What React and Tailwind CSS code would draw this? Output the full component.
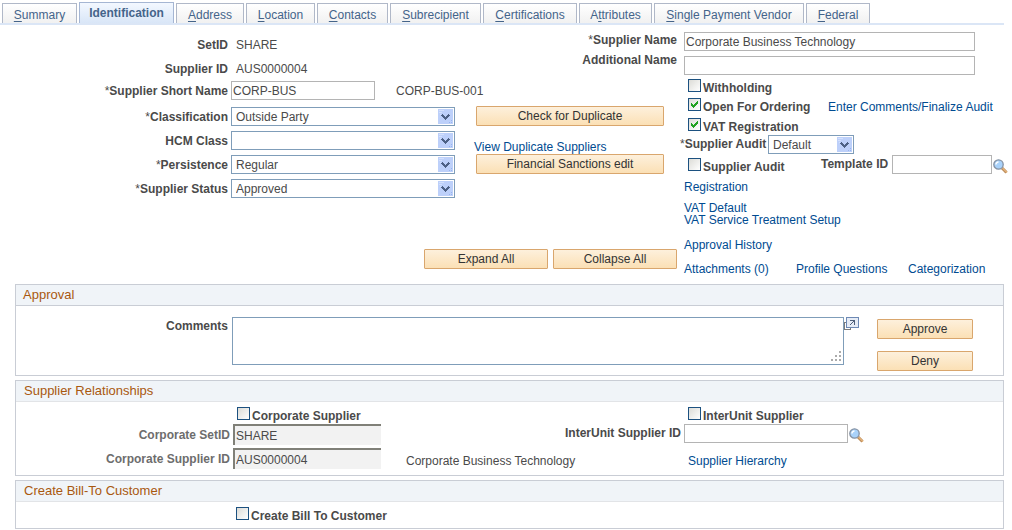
import { useState } from "react";

const tabs = [
  { before: "", key: "S", after: "ummary", width: "w-[75px]" },
  { before: "Identification", key: "", after: "", width: "w-[95px]" },
  { before: "", key: "A", after: "ddress", width: "w-[68px]" },
  { before: "", key: "L", after: "ocation", width: "w-[69px]" },
  { before: "", key: "C", after: "ontacts", width: "w-[71px]" },
  { before: "", key: "S", after: "ubrecipient", width: "w-[91px]" },
  { before: "", key: "C", after: "ertifications", width: "w-[94px]" },
  { before: "A", key: "t", after: "tributes", width: "w-[73px]" },
  { before: "", key: "S", after: "ingle Payment Vendor", width: "w-[150px]" },
  { before: "", key: "F", after: "ederal", width: "w-[64px]" },
];

function Tabs() {
  const [active, setActive] = useState(1);

  return (
    <nav className="mr-2 flex h-[25px] items-end gap-[2px] border-b-2 border-[#dbe6f6] pl-[2px]">
      {tabs.map((tab, index) => (
        <a
          key={index}
          href="#"
          onClick={() => setActive(index)}
          className={
            "flex items-center justify-center border border-b-0 whitespace-nowrap text-[#44648a] " +
            tab.width +
            (index === active
              ? " h-[21px] border-[#a5b6d3] bg-linear-to-b from-[#f3f8ff] to-[#d9e6f7] text-[12px] font-bold"
              : " h-[20px] border-[#b0b8c8] bg-linear-to-b from-white to-[#f1f1f1] pt-[2px] text-[12px]")
          }
        >
          <span>
            {tab.before}
            <span className="underline underline-offset-2">{tab.key}</span>
            {tab.after}
          </span>
        </a>
      ))}
    </nav>
  );
}

function Label({ htmlFor, className = "", required, children }) {
  return (
    <label
      htmlFor={htmlFor}
      className={"shrink-0 text-[12px] font-bold whitespace-nowrap " + className}
    >
      {required && <span className="font-normal">*</span>}
      {children}
    </label>
  );
}

function TextInput({ id, value = "", className }) {
  return (
    <input
      id={id}
      type="text"
      defaultValue={value}
      className={"block h-[19px] border border-[#b4b4b4] bg-white px-[1px] text-[12px] outline-none " + className}
    />
  );
}

// greyed out field with the old inset border
function InsetInput({ id, value }) {
  return (
    <input
      id={id}
      type="text"
      readOnly
      defaultValue={value}
      className="block h-[21px] w-[148px] border-t-2 border-l-2 border-[#808078] bg-[#f2f2f2] px-[1px] text-[12px] outline-none"
    />
  );
}

function SelectBox({ id, value, className }) {
  return (
    <div className={"relative h-[19px] " + className}>
      <select
        id={id}
        defaultValue={value}
        className="block h-full w-full appearance-none border border-[#7f9db9] bg-white px-1 text-[12px] outline-none"
      >
        <option value={value}>{value}</option>
      </select>
      <svg
        className="pointer-events-none absolute top-[2px] right-[2px]"
        width="15"
        height="15"
        viewBox="0 0 15 15"
        shapeRendering="crispEdges"
      >
        <rect width="15" height="15" rx="1" fill="#bdd0fa" />
        <path d="M1 1h5v1H1zM1 3h3v1H1zM2 5h1v1H2z" fill="#d3e0fd" />
        <path d="M11 13h1v1h-1zM13 11h1v1h-1zM13 13h1v1h-1z" fill="#98b4ee" />
        <path
          d="M4 5h1v1H4zM10 5h1v1h-1zM3 6h3v1H3zM9 6h3v1H9zM4 7h3v1H4zM8 7h3v1H8zM5 8h5v1H5zM6 9h3v1H6zM7 10h1v1H7z"
          fill="#4d6185"
        />
      </svg>
    </div>
  );
}

function Checkbox({ id, checked = false, className = "", children }) {
  return (
    <div className={"flex items-start gap-[2px] " + className}>
      <span className="relative h-[13px] w-[13px]">
        <input
          id={id}
          type="checkbox"
          defaultChecked={checked}
          className="peer block h-[13px] w-[13px] appearance-none border border-[#1c5180] bg-linear-to-br from-[#dcdcd7] to-white"
        />
        <svg
          className="pointer-events-none absolute top-0 left-0 hidden peer-checked:block"
          width="13"
          height="13"
          viewBox="0 0 13 13"
          shapeRendering="crispEdges"
        >
          <path
            d="M9 3h1v3H9v1H8v1H7v1H6v1H5V9H4V8H3V5h1v1h1v1h1V6h1V5h1V4h1z"
            fill="#21a121"
          />
        </svg>
      </span>
      <Label htmlFor={id} className="mt-[2px] leading-[14px]">
        {children}
      </Label>
    </div>
  );
}

function Button({ className, children }) {
  return (
    <button
      type="button"
      className={
        "block h-[20px] rounded-[1px] border border-[#d9a66d] bg-linear-to-b from-[#fdf0dc] to-[#fbe0b5] text-center text-[12px] leading-[18px] text-[#333333] " +
        className
      }
    >
      {children}
    </button>
  );
}

function Link({ className = "", children }) {
  return (
    <a href="#" className={"block text-[12px] leading-[12px] whitespace-nowrap text-[#004b91] " + className}>
      {children}
    </a>
  );
}

function LookupButton() {
  return (
    <button type="button" aria-label="Look up" className="ml-px block">
      <svg width="15" height="15" viewBox="0 0 15 15">
        <path d="M9 9l4.500 4.500" stroke="#b98a58" strokeWidth="3" />
        <path d="M9.500 9l4.500 4.500" stroke="#e3b27a" strokeWidth="1.500" />
        <circle cx="5.500" cy="5.500" r="4.700" fill="#a9d2fa" stroke="#8591a2" strokeWidth="1.300" />
        <path d="M3 5.500a2.500 2.500 0 0 1 2.500-2.500" stroke="#ffffff" strokeWidth="1.500" fill="none" />
      </svg>
    </button>
  );
}

function Panel({ title, tone, className, children }) {
  return (
    <section className="mr-2 ml-[15px] border border-[#c9cdd5]">
      <h2
        className={
          "h-[21px] border-b bg-[#f0f4f8] text-[13px] leading-[20px] text-[#a9580f] " +
          (tone === "strong" ? "border-[#c9cdd5] px-[7px]" : "border-[#e2e4e7] px-2")
        }
      >
        {title}
      </h2>
      <div className={className}>{children}</div>
    </section>
  );
}

export default function App() {
  return (
    <div className="bg-white pb-[2px] font-['Liberation_Sans',Arial,sans-serif] text-[12px] text-[#4a4a4a]">
      <Tabs />

      <main>
        <div className="flex">
          <div className="w-[677px] shrink-0">
            <div className="flex">
              {/* supplier keys and classification */}
              <div className="flex w-[474px] shrink-0 flex-col gap-[5px] pt-2">
                <div>
                  <div className="flex h-6 items-center gap-2">
                    <span className="w-[228px] text-right font-bold">SetID</span>
                    <span>SHARE</span>
                  </div>
                  <div className="flex h-6 items-center gap-2">
                    <span className="w-[228px] text-right font-bold">Supplier ID</span>
                    <span>AUS0000004</span>
                  </div>
                  <div className="mb-[2px] flex items-center gap-[3px]">
                    <Label htmlFor="shortName" required className="w-[228px] text-right">
                      Supplier Short Name
                    </Label>
                    <TextInput id="shortName" value="CORP-BUS" className="w-[144px]" />
                    <span className="ml-[18px] whitespace-nowrap">CORP-BUS-001</span>
                  </div>
                </div>
                <div className="flex items-center gap-[3px]">
                  <Label htmlFor="classification" required className="w-[228px] text-right">
                    Classification
                  </Label>
                  <SelectBox id="classification" value="Outside Party" className="w-[224px]" />
                </div>
                <div className="flex items-center gap-[3px]">
                  <Label htmlFor="hcmClass" className="w-[228px] text-right">
                    HCM Class
                  </Label>
                  <SelectBox id="hcmClass" value="" className="w-[224px]" />
                </div>
                <div className="flex items-center gap-[3px]">
                  <Label htmlFor="persistence" required className="w-[228px] text-right">
                    Persistence
                  </Label>
                  <SelectBox id="persistence" value="Regular" className="w-[224px]" />
                </div>
                <div className="flex items-center gap-[3px]">
                  <Label htmlFor="status" required className="w-[228px] text-right">
                    Supplier Status
                  </Label>
                  <SelectBox id="status" value="Approved" className="w-[224px]" />
                </div>
              </div>

              {/* name labels and duplicate checks */}
              <div className="flex-1 pt-[5px]">
                <div className="flex h-[76px] flex-col items-end">
                  <Label htmlFor="supplierName" required className="h-5 leading-5">
                    Supplier Name
                  </Label>
                  <Label htmlFor="additionalName" className="h-5 leading-5">
                    Additional Name
                  </Label>
                </div>
                <Button className="ml-[2px] w-[188px]">Check for Duplicate</Button>
                <Link className="pt-[15px] pb-px">View Duplicate Suppliers</Link>
                <Button className="ml-[2px] w-[188px]">Financial Sanctions edit</Button>
              </div>
            </div>

            <div className="mt-[51px] flex justify-end gap-[5px]">
              <Button className="w-[124px]">Expand All</Button>
              <Button className="w-[124px]">Collapse All</Button>
            </div>
          </div>

          {/* names, flags and related links */}
          <div className="flex-1 pt-[7px] pl-[7px]">
            <TextInput id="supplierName" value="Corporate Business Technology" className="mb-[5px] w-[291px]" />
            <TextInput id="additionalName" className="mb-1 w-[291px]" />
            <Checkbox id="withholding" className="ml-1 h-[19px]">
              Withholding
            </Checkbox>
            <div className="flex h-5">
              <Checkbox id="openOrdering" checked className="ml-1 w-[140px]">
                Open For Ordering
              </Checkbox>
              <Link className="pt-[3px]">Enter Comments/Finalize Audit</Link>
            </div>
            <Checkbox id="vat" checked className="ml-1 h-[17px]">
              VAT Registration
            </Checkbox>
            <div className="-ml-1 flex h-5">
              <Label htmlFor="auditDefault" required className="w-[88px]">
                Supplier Audit
              </Label>
              <SelectBox id="auditDefault" value="Default" className="w-[86px]" />
            </div>
            <div className="flex h-[26px] items-start">
              <Checkbox id="supplierAudit" className="ml-1 w-[133px] pt-[3px]">
                Supplier Audit
              </Checkbox>
              <Label htmlFor="templateId" className="w-[71px]">
                Template ID
              </Label>
              <TextInput id="templateId" className="w-[100px]" />
              <div className="pt-1">
                <LookupButton />
              </div>
            </div>
            <Link className="mb-[9px]">Registration</Link>
            <Link>VAT Default</Link>
            <Link className="mb-[13px]">VAT Service Treatment Setup</Link>
            <Link className="mb-3">Approval History</Link>
            <div className="flex">
              <Link className="w-[112px]">Attachments (0)</Link>
              <Link className="w-[112px]">Profile Questions</Link>
              <Link>Categorization</Link>
            </div>
          </div>
        </div>

        <div className="mt-[9px] flex flex-col gap-[4px]">
          <Panel title="Approval" tone="strong" className="flex h-[69px] items-start pt-[11px]">
            <Label htmlFor="comments" className="w-[212px] text-right">
              Comments
            </Label>
            <div className="relative ml-1 h-[48px] max-w-[612px] flex-1">
              <textarea
                id="comments"
                className="block h-full w-full resize-none border border-[#7f9db9] bg-white px-1 text-[12px] outline-none"
              />
              <svg
                className="pointer-events-none absolute right-[3px] bottom-[3px]"
                width="11"
                height="11"
                viewBox="0 0 11 11"
                shapeRendering="crispEdges"
              >
                <path
                  d="M9 0h2v2H9zM5 4h2v2H5zM9 4h2v2H9zM1 8h2v2H1zM5 8h2v2H5zM9 8h2v2H9z"
                  fill="#ababab"
                />
              </svg>
            </div>
            <button type="button" aria-label="Expand comments" className="block">
              <svg width="16" height="14" viewBox="0 0 16 14" shapeRendering="crispEdges">
                <path d="M.5 5.500h6v7h-6z" fill="#ffffff" stroke="#7c7c7c" />
                <path d="M2.500 .5h12v10h-12z" fill="#e6ecf6" stroke="#6d89b4" />
                <path d="M6 3h5v5h-1V5H9v1H8v1H7v1H6V7h1V6h1V5h1V4H6z" fill="#50607a" />
              </svg>
            </button>
            <div className="flex flex-col gap-3 pt-[2px] pl-[17px]">
              <Button className="w-24">Approve</Button>
              <Button className="w-24">Deny</Button>
            </div>
          </Panel>

          <Panel title="Supplier Relationships" className="flex h-[73px] pt-[5px]">
            <div className="w-[548px] shrink-0">
              <Checkbox id="corporateSupplier" className="ml-[221px] h-[17px]">
                Corporate Supplier
              </Checkbox>
              <div className="mb-[3px] flex items-center gap-[3px]">
                <Label htmlFor="corpSetId" className="w-[214px] text-right text-[#6d6d6d]">
                  Corporate SetID
                </Label>
                <InsetInput id="corpSetId" value="SHARE" />
              </div>
              <div className="flex items-center gap-[3px]">
                <Label htmlFor="corpSupplierId" className="w-[214px] text-right text-[#6d6d6d]">
                  Corporate Supplier ID
                </Label>
                <InsetInput id="corpSupplierId" value="AUS0000004" />
                <span className="ml-[22px] pt-1 leading-[14px] whitespace-nowrap">
                  Corporate Business Technology
                </span>
              </div>
            </div>
            <div>
              <Checkbox id="interUnit" className="ml-[124px] h-[17px]">
                InterUnit Supplier
              </Checkbox>
              <div className="flex h-[31px] items-start">
                <Label htmlFor="interUnitId" className="mr-[3px] w-[117px] text-right leading-[19px]">
                  InterUnit Supplier ID
                </Label>
                <TextInput id="interUnitId" className="w-[164px]" />
                <div className="pt-1">
                  <LookupButton />
                </div>
              </div>
              <Link className="ml-[124px]">Supplier Hierarchy</Link>
            </div>
          </Panel>

          <Panel title="Create Bill-To Customer" className="h-[26px] pt-[5px]">
            <Checkbox id="billTo" className="ml-[220px]">
              Create Bill To Customer
            </Checkbox>
          </Panel>
        </div>
      </main>
    </div>
  );
}
